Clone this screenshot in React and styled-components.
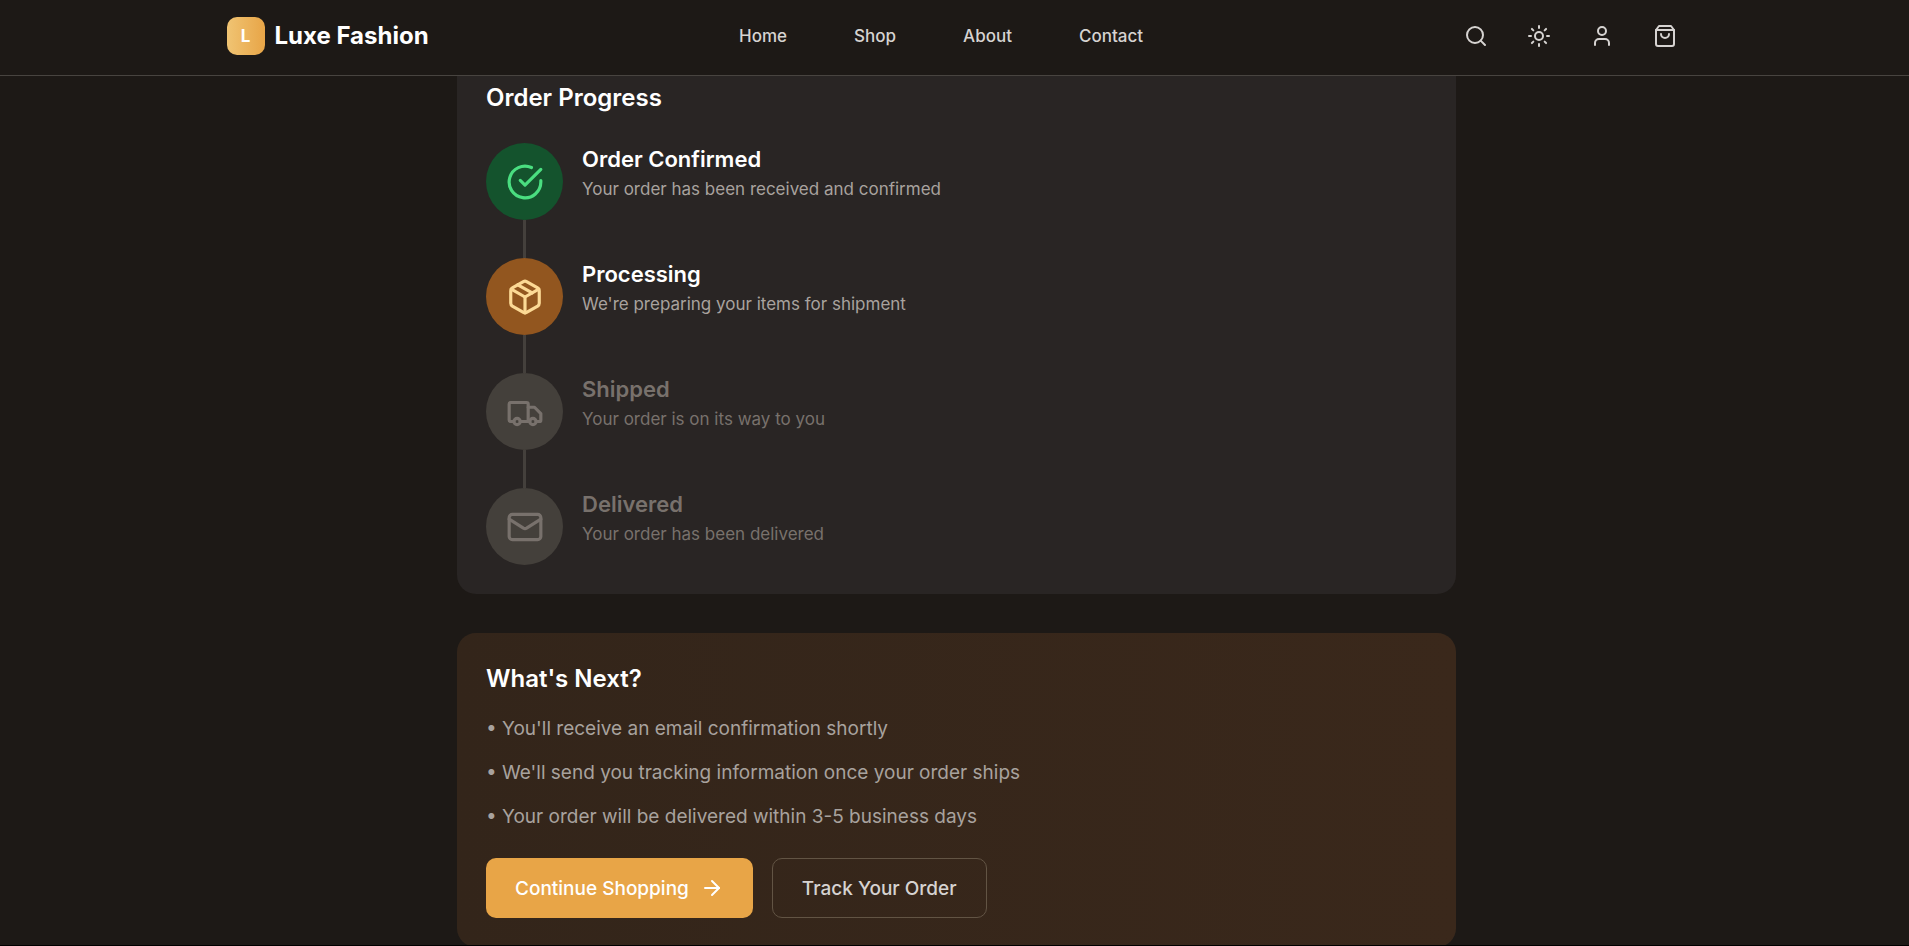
import React from "react";
import styled, { createGlobalStyle } from "styled-components";
import { Search, Sun, User, Mail, ArrowRight } from "lucide-react";

const GlobalStyle = createGlobalStyle`
  *, *::before, *::after { box-sizing: border-box; }
  body {
    margin: 0;
    background: #1d1916;
    color: #ffffff;
    font-family: Inter, "Liberation Sans", sans-serif;
  }
  h2, h3, p, ul, ol { margin: 0; padding: 0; }
  ul, ol { list-style: none; }
  a { color: inherit; text-decoration: none; }
`;

const Page = styled.div`
  display: flex;
  flex-direction: column;
  height: 100vh;
  overflow: hidden;
  border-bottom: 1px solid #000000;
`;

const Header = styled.header`
  position: sticky;
  top: 0;
  z-index: 10;
  flex: none;
  background: #1d1916;
  border-bottom: 1px solid #484440;
  padding-left: 4px;
`;

const HeaderInner = styled.div`
  display: flex;
  align-items: center;
  justify-content: space-between;
  max-width: 1460px;
  margin: 0 auto;
  padding: 14px 0 17px;
`;

const Brand = styled.a`
  display: flex;
  align-items: center;
  gap: 10px;
  font-size: 24px;
  line-height: 34px;
  font-weight: 700;
`;

const BrandMark = styled.span`
  display: grid;
  place-items: center;
  width: 38px;
  height: 38px;
  border-radius: 10px;
  background: linear-gradient(90deg, #f0c473, #e8a547);
  font-size: 17px;
`;

const Nav = styled.nav`
  display: flex;
  gap: 67px;
`;

const NavLink = styled.a`
  font-size: 17px;
  line-height: 24px;
  font-weight: 500;
  color: #d6d3d1;
`;

const Actions = styled.div`
  display: flex;
  gap: 19px;
`;

const IconButton = styled.button`
  display: grid;
  place-items: center;
  height: 44px;
  padding: 0 10px;
  border: 0;
  background: none;
  color: #d6d3d1;
`;

const Main = styled.main`
  flex: 1;
  min-height: 0;
  padding-left: 4px;
`;

const Content = styled.div`
  display: flex;
  flex-direction: column;
  gap: 39px;
  max-width: 999px;
  margin: -24px auto 0;
`;

const Card = styled.section`
  padding: 29px;
  border-radius: 19px;
  background: ${({ $warm }) => ($warm ? "linear-gradient(90deg, #33251a, #3a281b)" : "#292524")};
`;

const CardTitle = styled.h2`
  margin-bottom: ${({ $gap }) => $gap}px;
  font-size: 24px;
  line-height: 34px;
  font-weight: 600;
`;

const Step = styled.li`
  display: grid;
  grid-template-columns: 77px 1fr;
  column-gap: 19px;
`;

const tones = {
  done: { back: "#14532d", icon: "#4ade80" },
  active: { back: "#92561f", icon: "#fcd995" },
  pending: { back: "#44403b", icon: "#78716c" },
};

const StepBadge = styled.span`
  display: grid;
  place-items: center;
  height: 77px;
  border-radius: 50%;
  background: ${({ $tone }) => tones[$tone].back};
  color: ${({ $tone }) => tones[$tone].icon};
`;

const Connector = styled.span`
  justify-self: center;
  width: 3px;
  height: 38px;
  background: #44403c;
`;

const StepTitle = styled.h3`
  font-size: 22px;
  line-height: 33px;
  font-weight: 600;
  color: ${({ $muted }) => ($muted ? "#78716c" : "#ffffff")};
`;

const StepText = styled.p`
  font-size: 17px;
  line-height: 26px;
  color: ${({ $muted }) => ($muted ? "#78716c" : "#a8a29e")};
`;

const Notes = styled.ul`
  display: flex;
  flex-direction: column;
  gap: 15px;
  margin-bottom: 27px;
  font-size: 19px;
  line-height: 29px;
  color: #a8a29e;
`;

const Buttons = styled.div`
  display: flex;
  gap: 19px;
`;

const Button = styled.button`
  display: flex;
  align-items: center;
  gap: 11px;
  height: 60px;
  padding: 0 29px;
  border: ${({ $primary }) => ($primary ? "0" : "1px solid #625444")};
  border-radius: 10px;
  background: ${({ $primary }) => ($primary ? "#e8a547" : "transparent")};
  color: ${({ $primary }) => ($primary ? "#ffffff" : "#d6d3d1")};
  font: inherit;
  font-size: 19px;
  font-weight: 500;
`;

const Glyph = ({ size, children }) => (
  <svg
    width={size}
    height={size}
    viewBox="0 0 24 24"
    fill="none"
    stroke="currentColor"
    strokeWidth="2"
    strokeLinecap="round"
    strokeLinejoin="round"
    aria-hidden="true"
  >
    {children}
  </svg>
);

const BagIcon = ({ size }) => (
  <Glyph size={size}>
    <path d="M6 2 3 6v14a2 2 0 0 0 2 2h14a2 2 0 0 0 2-2V6l-3-4Z" />
    <path d="M3 6h18" />
    <path d="M16 10a4 4 0 0 1-8 0" />
  </Glyph>
);

const CheckIcon = ({ size }) => (
  <Glyph size={size}>
    <path d="M22 11.08V12a10 10 0 1 1-5.93-9.14" />
    <path d="m9 11 3 3L22 4" />
  </Glyph>
);

const PackageIcon = ({ size }) => (
  <Glyph size={size}>
    <path d="m7.5 4.27 9 5.15" />
    <path d="M21 8a2 2 0 0 0-1-1.73l-7-4a2 2 0 0 0-2 0l-7 4A2 2 0 0 0 3 8v8a2 2 0 0 0 1 1.73l7 4a2 2 0 0 0 2 0l7-4A2 2 0 0 0 21 16Z" />
    <path d="m3.3 7 8.7 5 8.7-5" />
    <path d="M12 22V12" />
  </Glyph>
);

const TruckIcon = ({ size }) => (
  <Glyph size={size}>
    <path d="M5 18H3c-.6 0-1-.4-1-1V7c0-.6.4-1 1-1h10c.6 0 1 .4 1 1v11" />
    <path d="M14 9h4l4 4v4c0 .6-.4 1-1 1h-2" />
    <circle cx="7" cy="18" r="2" />
    <path d="M15 18H9" />
    <circle cx="17" cy="18" r="2" />
  </Glyph>
);

const links = ["Home", "Shop", "About", "Contact"];

const actions = [
  { label: "Search", Icon: Search },
  { label: "Switch theme", Icon: Sun },
  { label: "Account", Icon: User },
  { label: "Shopping bag", Icon: BagIcon },
];

const steps = [
  { title: "Order Confirmed", text: "Your order has been received and confirmed", tone: "done", Icon: CheckIcon },
  { title: "Processing", text: "We're preparing your items for shipment", tone: "active", Icon: PackageIcon },
  { title: "Shipped", text: "Your order is on its way to you", tone: "pending", Icon: TruckIcon },
  { title: "Delivered", text: "Your order has been delivered", tone: "pending", Icon: Mail },
];

const notes = [
  "You'll receive an email confirmation shortly",
  "We'll send you tracking information once your order ships",
  "Your order will be delivered within 3-5 business days",
];

export default function App() {
  return (
    <Page>
      <GlobalStyle />
      <Header>
        <HeaderInner>
          <Brand href="#home">
            <BrandMark>L</BrandMark>
            Luxe Fashion
          </Brand>
          <Nav>
            {links.map((name) => (
              <NavLink key={name} href={`#${name.toLowerCase()}`}>{name}</NavLink>
            ))}
          </Nav>
          <Actions>
            {actions.map(({ label, Icon }) => (
              <IconButton key={label} type="button" aria-label={label}>
                <Icon size={24} />
              </IconButton>
            ))}
          </Actions>
        </HeaderInner>
      </Header>
      <Main>
        <Content>
          <Card>
            <CardTitle $gap={28}>Order Progress</CardTitle>
            <ol>
              {steps.map(({ title, text, tone, Icon }, index) => (
                <Step key={title}>
                  <StepBadge $tone={tone}>
                    <Icon size={38} />
                  </StepBadge>
                  <div>
                    <StepTitle $muted={tone === "pending"}>{title}</StepTitle>
                    <StepText $muted={tone === "pending"}>{text}</StepText>
                  </div>
                  {index < steps.length - 1 && <Connector />}
                </Step>
              ))}
            </ol>
          </Card>
          <Card $warm>
            <CardTitle $gap={18}>What's Next?</CardTitle>
            <Notes>
              {notes.map((note) => (
                <li key={note}>• {note}</li>
              ))}
            </Notes>
            <Buttons>
              <Button type="button" $primary>
                Continue Shopping
                <ArrowRight size={24} />
              </Button>
              <Button type="button">Track Your Order</Button>
            </Buttons>
          </Card>
        </Content>
      </Main>
    </Page>
  );
}
